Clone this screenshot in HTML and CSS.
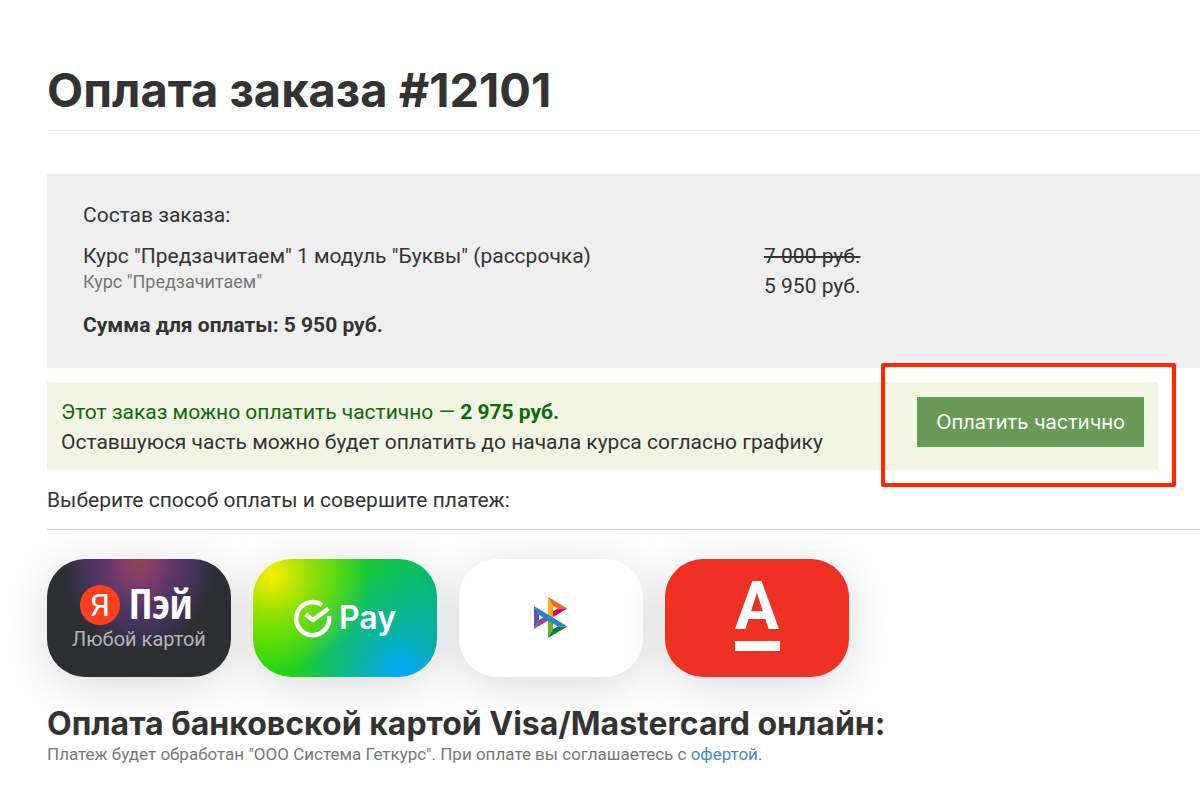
FILE: index.html
```
<!DOCTYPE html>
<html lang="ru">
<head>
  <meta charset="UTF-8">
  <meta name="viewport" content="width=device-width, initial-scale=1">
  <title>Оплата заказа #12101</title>
  <link rel="stylesheet" href="styles.css">
</head>
<body>

<div class="container">
  <h1>Оплата заказа #12101</h1>

  <div class="order">
    <p>Состав заказа:</p>
    <div class="order-row">
      <div class="order-name">
        <div>Курс "Предзачитаем" 1 модуль "Буквы" (рассрочка)</div>
        <div class="order-sub">Курс "Предзачитаем"</div>
      </div>
      <div class="order-price">
        <del>7 000 руб.</del>
        <div>5 950 руб.</div>
      </div>
    </div>
    <p class="order-total">Сумма для оплаты: 5 950 руб.</p>
  </div>

  <div class="partial">
    <div class="partial-text">
      <div class="green">Этот заказ можно оплатить частично — <b>2 975 руб.</b></div>
      <div>Оставшуюся часть можно будет оплатить до начала курса согласно графику</div>
    </div>
    <div class="partial-action">
      <button type="button" class="btn-partial">Оплатить частично</button>
      <span class="frame"></span>
    </div>
  </div>

  <p class="choose">Выберите способ оплаты и совершите платеж:</p>

  <div class="methods">
    <button type="button" class="method yandex" aria-label="Яндекс Пэй">
      <svg viewBox="0 0 184 118">
        <circle cx="53" cy="46" r="20" fill="#fc3f1d"/>
        <text x="53" y="57" class="ya-letter">Я</text>
        <text x="82" y="60" class="ya-name">Пэй</text>
        <text x="92" y="87" class="ya-note">Любой картой</text>
      </svg>
    </button>

    <button type="button" class="method sber" aria-label="SberPay">
      <svg viewBox="0 0 184 118">
        <path d="M69 46A16.500 16.500 0 1 0 76 57" fill="none" stroke="#fff" stroke-width="4.500"/>
        <path d="M52.500 55.500L60 61L75.500 49.500" fill="none" stroke="#fff" stroke-width="4.500"/>
        <text x="86" y="70" class="sber-name">Pay</text>
      </svg>
    </button>

    <button type="button" class="method sbp" aria-label="Система быстрых платежей">
      <svg viewBox="0 0 184 118">
        <path d="M75 47L80 55.500V61L75 70Z" fill="#5b57a2"/>
        <path d="M75 70L80 61L85 58L90 61Z" fill="#90489a"/>
        <path d="M89 38L94 47V60L89 57.500Z" fill="#fbae17"/>
        <path d="M89 38L108.500 49.500H99L94 47Z" fill="#f06a24"/>
        <path d="M94 58V52L99 49.500H108.500Z" fill="#e1084e"/>
        <path d="M89 56L94 59V70L89 79Z" fill="#66b32e"/>
        <path d="M89 79L94 70L99 67.500H108.500Z" fill="#0d8038"/>
        <path d="M75 47L108.500 67.500H99L80 56Z" fill="#1f86c9"/>
      </svg>
    </button>

    <button type="button" class="method alfa" aria-label="Альфа-Банк">
      <svg viewBox="0 0 184 118">
        <text x="92" y="70" class="alfa-letter">А</text>
        <rect x="70" y="82" width="45" height="10" fill="#fff"/>
      </svg>
    </button>
  </div>

  <h2>Оплата банковской картой Visa/Mastercard онлайн:</h2>
  <p class="note">Платеж будет обработан "ООО Система Геткурс". При оплате вы соглашаетесь с <a href="#">офертой</a>.</p>
</div>

</body>
</html>
```
FILE: styles.css
```
* {
  box-sizing: border-box;
}

body {
  margin: 0;
  background: #fff;
  color: #333;
  font-family: Roboto, sans-serif;
  font-size: 21px;
  line-height: 30px;
  overflow-x: hidden;
}

p {
  margin: 0;
}

.container {
  padding: 60px 0 20px 47px;
}

h1,
h2 {
  font-family: Inter, sans-serif;
  font-weight: 700;
}

h1 {
  margin: 0 0 43px;
  padding-bottom: 10px;
  border-bottom: 1px solid #eee;
  font-size: 47px;
  line-height: 60px;
}

/* order contents */
.order {
  padding: 26px 36px 28px;
  background: #efefef;
}

.order-row {
  display: flex;
  margin: 11px 0 9px;
}

.order-name {
  width: 63%;
}

.order-sub {
  color: #777;
  font-size: 18px;
  line-height: 22px;
}

.order-price {
  white-space: nowrap;
}

.order-price del {
  display: block;
}

.order-total {
  font-weight: 700;
}

/* partial payment */
.partial {
  display: flex;
  justify-content: space-between;
  align-items: flex-start;
  margin: 14px 42px 0 0;
  padding: 15px 14px 13px;
  background: #f2f5e3;
}

.green {
  color: #0a6b0a;
}

.partial-action {
  position: relative;
}

.btn-partial {
  height: 50px;
  padding: 0 18px;
  border: 1px solid #4cae4c;
  background: #6a9a56;
  color: #fff;
  font-family: Inter, sans-serif;
  font-size: 20px;
  cursor: pointer;
}

.frame {
  position: absolute;
  top: -34px;
  right: -32px;
  bottom: -40px;
  left: -36px;
  border: 4px solid #ff2600;
  border-radius: 2px;
  pointer-events: none;
}

.choose {
  padding: 15px 0 14px;
  border-bottom: 1px solid #d5d5d5;
}

/* payment methods */
.methods {
  display: flex;
  flex-wrap: wrap;
  gap: 22px;
  margin: 29px 0 27px;
}

.method {
  width: 184px;
  height: 118px;
  padding: 0;
  border: 0;
  border-radius: 38px;
  box-shadow: 0 8px 50px rgba(0, 0, 0, .15);
  cursor: pointer;
}

.method svg {
  display: block;
  width: 100%;
}

.yandex {
  background: radial-gradient(ellipse 76px 92px at 50% 0, #8b4852 0, #853c68 22%, #573568 52%, #3f3255 78%, #2e2f33 100%) #2e2f33;
}

.sber {
  background:
    radial-gradient(circle at 10% 13%, #fbee00 0, rgba(180, 230, 0, .7) 22%, rgba(80, 215, 0, 0) 50%),
    radial-gradient(circle at 81% 97%, #08a5ff 0, rgba(8, 175, 190, .8) 22%, rgba(10, 190, 120, 0) 58%),
    linear-gradient(100deg, #2cdb00 0, #17cc2b 50%, #04bd69 90%);
}

.sbp {
  background: #fff;
}

.alfa {
  background: #ef3124;
}

.method text {
  fill: #fff;
  font-family: Roboto, sans-serif;
}

.method .ya-letter {
  font-size: 32px;
  text-anchor: middle;
}

.method .ya-name {
  font-family: "Open Sans Condensed", "Open Sans", sans-serif;
  font-size: 41px;
  font-weight: 700;
}

.method .ya-note {
  fill: #b4b4b8;
  font-size: 20px;
  text-anchor: middle;
}

.method .sber-name {
  font-family: Inter, sans-serif;
  font-size: 32px;
  font-weight: 600;
}

.method .alfa-letter {
  font-size: 66px;
  font-weight: 700;
  text-anchor: middle;
}

h2 {
  margin: 0;
  font-size: 32px;
  line-height: 40px;
}

.note {
  color: #777;
  font-size: 17px;
  line-height: 20px;
}

.note a {
  color: #428bca;
  text-decoration: none;
}
```
